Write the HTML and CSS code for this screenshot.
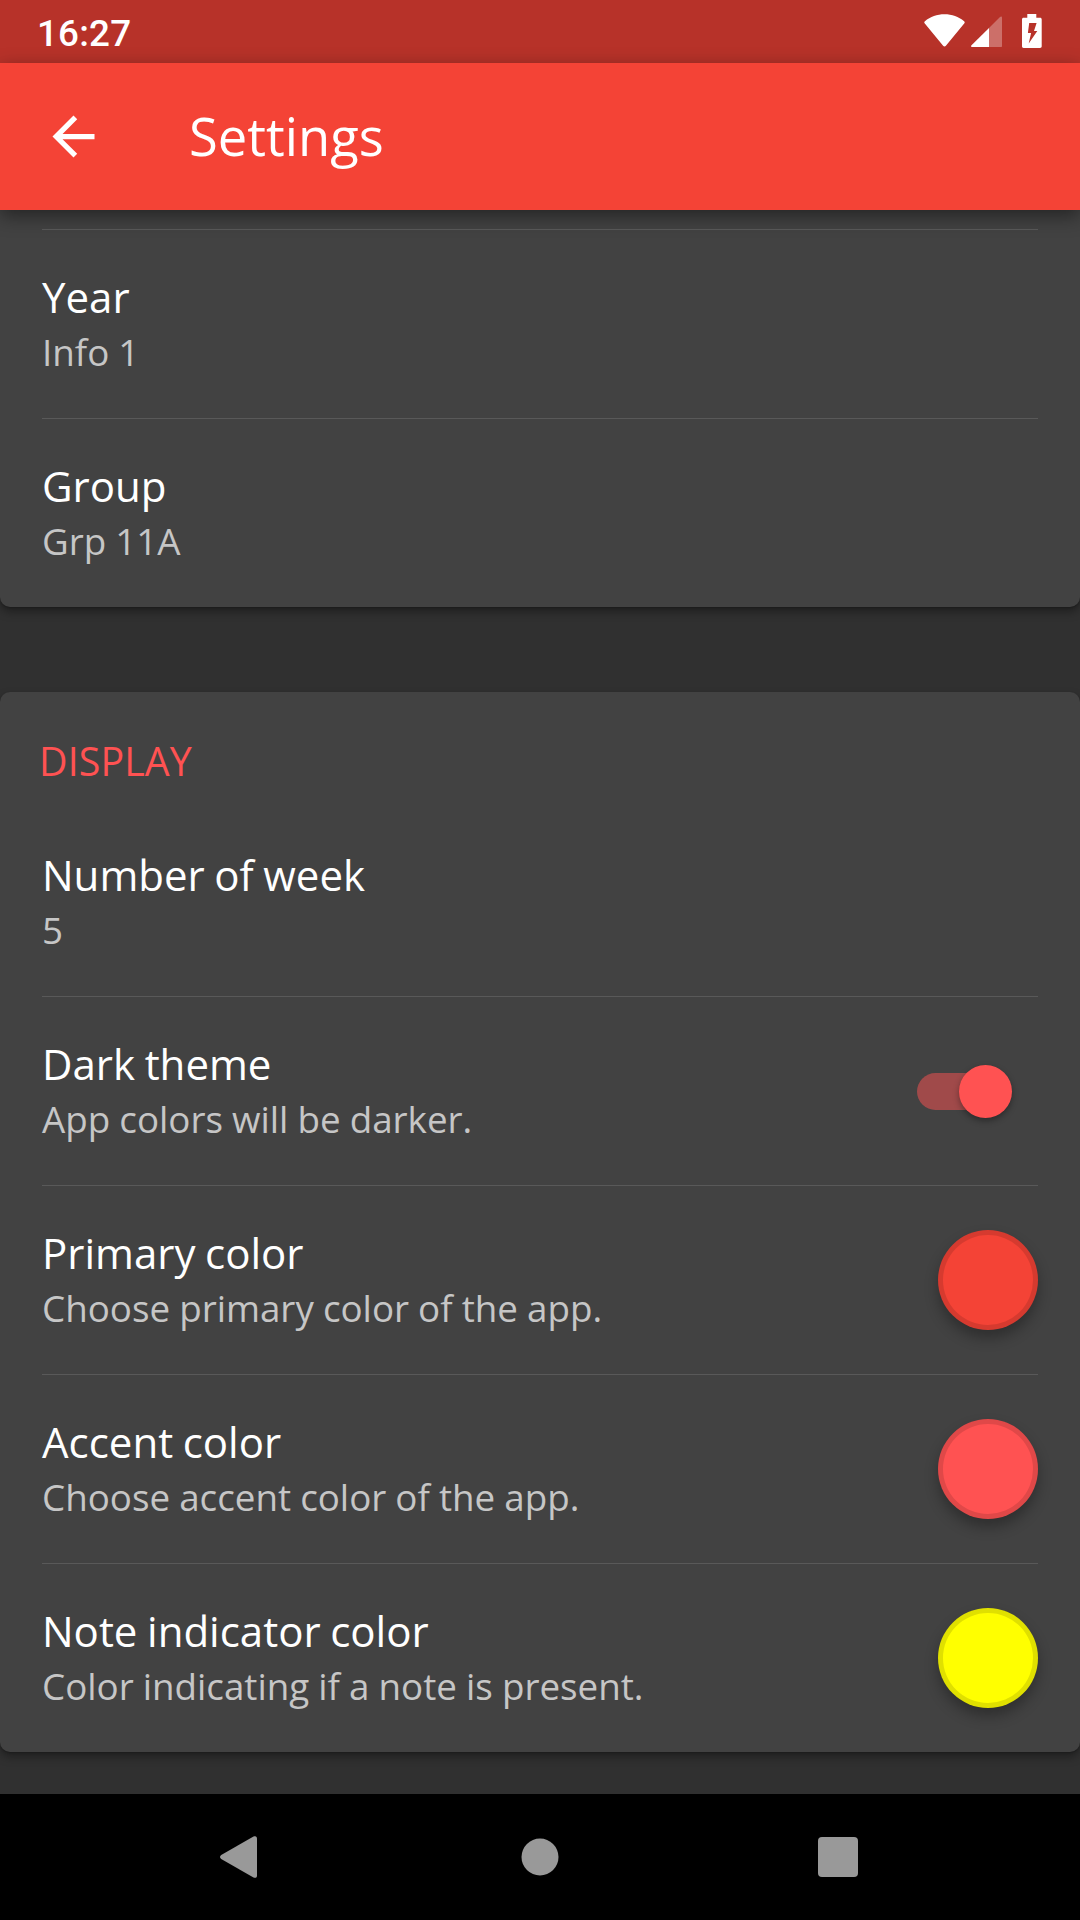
FILE: index.html
```html
<!DOCTYPE html>
<html lang="en">
<head>
<meta charset="utf-8">
<title>Settings</title>
<link rel="stylesheet" href="styles.css">
</head>
<body>
<div class="screen">
  <header class="status-bar">
    <span class="clock">16:27</span>
    <div class="status-icons">
      <svg class="wifi" width="41" height="33" viewBox="0 0 41 33"><path d="M20.5 32.4c-.6 0-1-.2-1.400-.7L.6 9.200C.1 8.500.2 7.700.9 7.200 6.500 2.700 13 .3 20.500.3s14 2.400 19.600 6.900c.7.5.8 1.300.3 2L21.900 31.700c-.4.500-.8.700-1.400.7z"/></svg>
      <svg class="signal" width="32" height="32" viewBox="0 0 32 32"><path class="dim" d="M18 12 29 1c1-1 2-.6 2 .6V30c0 .7-.3 1-1 1H18z"/><path d="M18 12v19H1C-.2 31-.2 30 .5 29.300z"/></svg>
      <svg class="battery" width="20" height="34" viewBox="0 0 20 34"><path fill-rule="evenodd" d="M5.300 0h9v3.700h3.700c1.100 0 1.700.6 1.700 1.700v26.800c0 1.100-.6 1.700-1.700 1.700H1.700C.6 33.900 0 33.300 0 32.200V5.400C0 4.300.6 3.700 1.700 3.700h3.600zM7.200 9 5.900 19h3.200L6.700 29.600 15.300 17h-3.300l2.600-8z"/></svg>
    </div>
  </header>

  <div class="app-bar">
    <svg class="back-arrow" width="63" height="63" viewBox="0 0 24 24"><path d="M20 11H7.830l5.590-5.590L12 4l-8 8 8 8 1.410-1.410L7.830 13H20v-2z"/></svg>
    <h1 class="app-title">Settings</h1>
  </div>

  <main class="content">
    <section class="card card-first">
      <div class="row">
        <div class="texts"><div class="title">Year</div><div class="summary">Info 1</div></div>
      </div>
      <div class="row">
        <div class="texts"><div class="title">Group</div><div class="summary">Grp 11A</div></div>
      </div>
    </section>

    <section class="card">
      <h2 class="card-header">DISPLAY</h2>
      <div class="row row-plain">
        <div class="texts"><div class="title">Number of week</div><div class="summary">5</div></div>
      </div>
      <div class="row">
        <div class="texts"><div class="title">Dark theme</div><div class="summary">App colors will be darker.</div></div>
        <div class="switch"><div class="thumb"></div></div>
      </div>
      <div class="row">
        <div class="texts"><div class="title">Primary color</div><div class="summary">Choose primary color of the app.</div></div>
        <div class="swatch swatch-primary"></div>
      </div>
      <div class="row">
        <div class="texts"><div class="title">Accent color</div><div class="summary">Choose accent color of the app.</div></div>
        <div class="swatch swatch-accent"></div>
      </div>
      <div class="row">
        <div class="texts"><div class="title">Note indicator color</div><div class="summary">Color indicating if a note is present.</div></div>
        <div class="swatch swatch-note"></div>
      </div>
    </section>
  </main>

  <nav class="nav-bar">
    <svg width="38" height="42" viewBox="0 0 38 42"><path d="M1.200 19 33.500.6C35.500-.5 37 .4 37 2.500v37c0 2.100-1.500 3-3.500 1.900L1.200 23c-1.600-1-1.600-3 0-4z"/></svg>
    <svg class="nav-home" width="38" height="38" viewBox="0 0 38 38"><circle cx="19" cy="19" r="18.500"/></svg>
    <svg width="40" height="40" viewBox="0 0 40 40"><rect width="40" height="40" rx="4"/></svg>
  </nav>
</div>
</body>
</html>
```
FILE: styles.css
```css
* {
  box-sizing: border-box;
}

body {
  margin: 0;
  background: #303030;
  font-family: "Open Sans", sans-serif;
}

svg {
  display: block;
}

.screen {
  display: flex;
  flex-direction: column;
  width: 1080px;
  height: 1920px;
  overflow: hidden;
}

.status-bar {
  display: flex;
  flex: none;
  justify-content: space-between;
  height: 63px;
  padding: 0 38px 0 37px;
  background: #b73229;
}

.clock {
  padding-top: 12px;
  color: #fff;
  font: 500 36.75px/43px Roboto, sans-serif;
  letter-spacing: 0.2px;
}

.status-icons {
  display: flex;
  align-items: flex-start;
  padding-top: 14px;
  fill: #fff;
}

.signal {
  margin: 2px 19px 0 6px;
}

.signal .dim {
  opacity: 0.3;
}

.app-bar {
  display: flex;
  flex: none;
  align-items: center;
  gap: 84px;
  height: 147px;
  padding-left: 42px;
  background: #f44336;
  box-shadow: 0 6px 18px rgba(0, 0, 0, 0.45);
  z-index: 1;
}

.back-arrow {
  fill: #fff;
}

.app-title {
  margin: 0 0 2px;
  color: #fff;
  font-size: 52.5px;
  font-weight: 400;
  line-height: 72px;
}

.content {
  flex: 1;
  display: flex;
  flex-direction: column;
  gap: 85px;
  overflow: hidden;
}

.card {
  flex: none;
  background: #424242;
  border-radius: 10px;
  box-shadow: 0 5px 10px rgba(0, 0, 0, 0.35), 0 1px 2px rgba(0, 0, 0, 0.2);
}

.card-first {
  padding-top: 19px;
  border-radius: 0 0 10px 10px;
}

.card-header {
  height: 116px;
  margin: 0;
  padding: 42px 39px 0;
  color: #ff5252;
  font-size: 39.375px;
  font-weight: 400;
  line-height: 54px;
  letter-spacing: 0.1px;
}

.row {
  display: flex;
  align-items: center;
  justify-content: space-between;
  height: 189px;
  margin: 0 42px;
  border-top: 1px solid #595959;
}

.row-plain {
  height: 188px;
  border-top: 0;
}

.texts {
  display: flex;
  flex-direction: column;
  gap: 2px;
  align-self: flex-start;
  padding-top: 38px;
  white-space: nowrap;
}

.title {
  color: #fff;
  font-size: 42px;
  line-height: 57px;
  word-spacing: -1.3px;
}

.summary {
  color: #c6c6c6;
  font-size: 36.75px;
  line-height: 50px;
  word-spacing: -0.45px;
}

.switch {
  display: flex;
  align-items: center;
  justify-content: flex-end;
  width: 90px;
  height: 37px;
  margin-right: 31px;
  border-radius: 19px;
  background: #a04a4a;
}

.thumb {
  flex: none;
  width: 53px;
  height: 53px;
  margin-right: -5px;
  border-radius: 50%;
  background: #ff5252;
  box-shadow: 0 3px 6px rgba(0, 0, 0, 0.35);
}

.swatch {
  width: 100px;
  height: 100px;
  border: 5px solid rgba(0, 0, 0, 0.12);
  border-radius: 50%;
  box-shadow: 0 8px 14px rgba(0, 0, 0, 0.3);
}

.swatch-primary {
  background: #f44336;
}

.swatch-accent {
  background: #ff5252;
}

.swatch-note {
  background: #ff0;
}

.nav-bar {
  display: flex;
  flex: none;
  align-items: center;
  justify-content: space-between;
  height: 126px;
  padding: 0 222px 0 220px;
  background: #000;
  fill: #999;
}

.nav-home {
  margin: 0 0 1px 3px;
}
```
